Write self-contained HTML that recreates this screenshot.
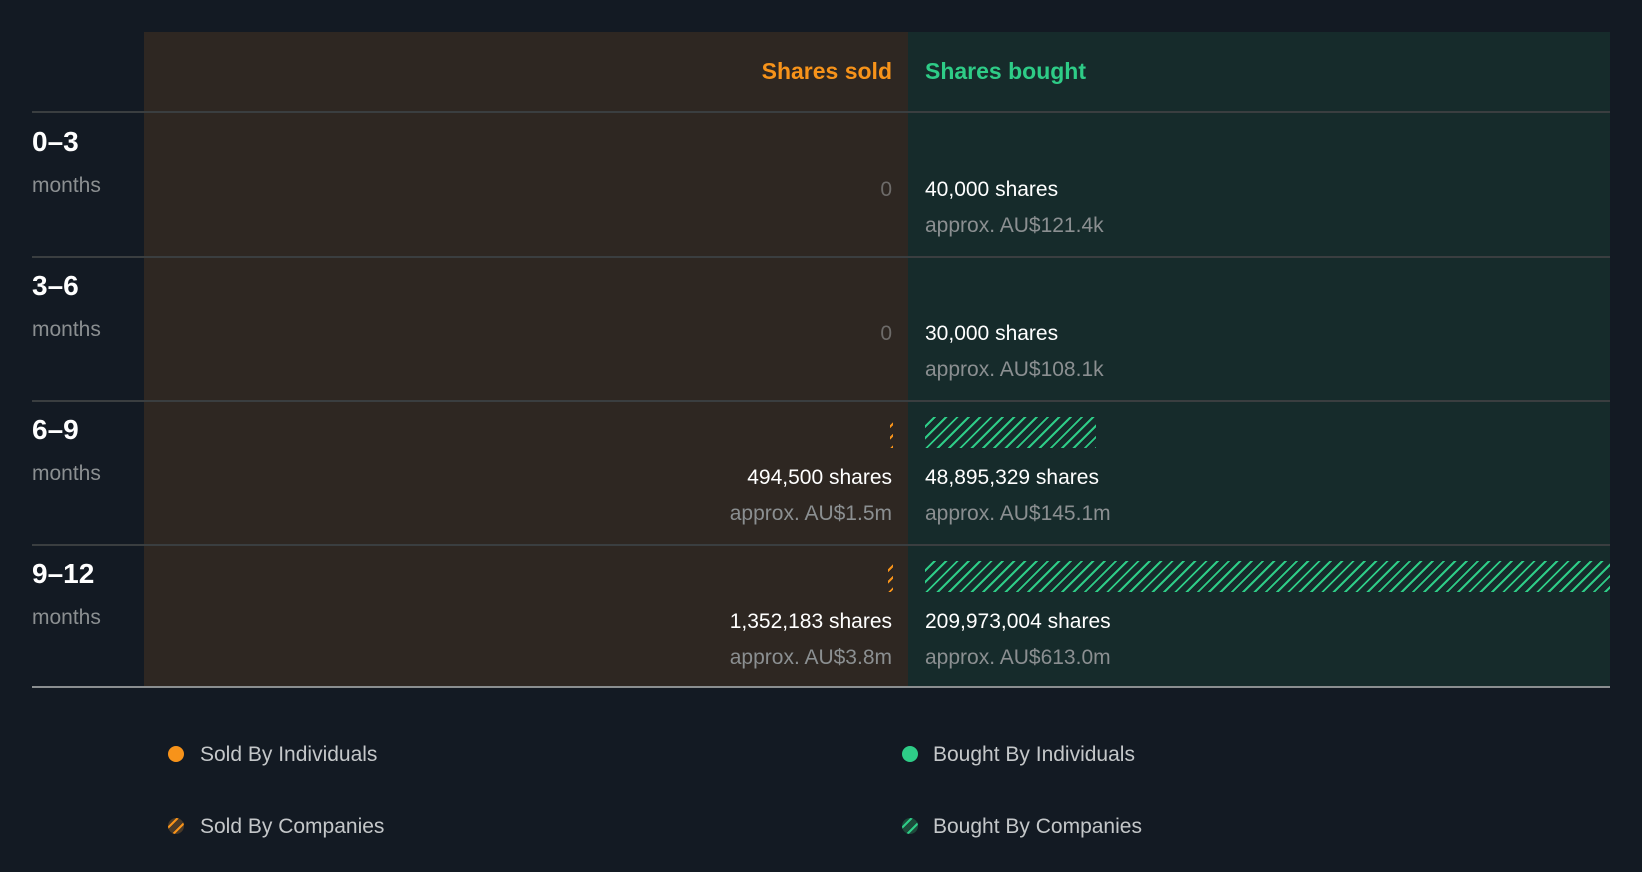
<!DOCTYPE html>
<html><head><style>
*{margin:0;padding:0;box-sizing:border-box}
body{width:1642px;height:872px;background:#131a23;font-family:"Liberation Sans",Arial,sans-serif;position:relative;overflow:hidden}
.a{position:absolute}
.lp{left:144px;width:764px;top:32px;height:655px;background:#2e2722}
.rp{left:908px;width:702px;top:32px;height:655px;background:#162b2b}
.hl{left:32px;width:1578px;height:2px;background:#3a3e40}
.r{text-align:right;right:calc(1642px - 892px)}
.w{color:#fff;font-size:21px}
.g{color:#8b8f91;font-size:21px}
.hd{font-size:23px;font-weight:bold}
.p{font-size:28px;font-weight:bold;color:#fff;left:32px}
.m{font-size:21px;color:#8b8f91;left:32px}
.hg{background:repeating-linear-gradient(135deg,transparent 0 6px,#2ecc87 6px 8px)}
.ho{background:repeating-linear-gradient(135deg,transparent 0 6px,#f7931a 6px 8px)}
.lg{font-size:21px;color:#c4c7c9}
.dot{width:16px;height:16px;border-radius:50%}
</style></head><body>
<div class="a lp"></div><div class="a rp"></div>
<div class="a hd r" style="top:58px;color:#f7931a">Shares sold</div>
<div class="a hd" style="left:925px;top:58px;color:#2ecc87">Shares bought</div>
<div class="a hl" style="top:111px"></div>
<div class="a hl" style="top:256px"></div>
<div class="a hl" style="top:400px"></div>
<div class="a hl" style="top:544px"></div>
<div class="a" style="left:32px;width:1578px;height:2px;top:686px;background:#8a8e90"></div>

<div class="a p" style="top:126px">0–3</div><div class="a m" style="top:174px">months</div>
<div class="a p" style="top:270px">3–6</div><div class="a m" style="top:318px">months</div>
<div class="a p" style="top:414px">6–9</div><div class="a m" style="top:462px">months</div>
<div class="a p" style="top:558px">9–12</div><div class="a m" style="top:606px">months</div>

<div class="a r g" style="top:178px;color:#6d6b69">0</div>
<div class="a w" style="left:925px;top:178px">40,000 shares</div>
<div class="a g" style="left:925px;top:214px">approx. AU$121.4k</div>

<div class="a r g" style="top:322px;color:#6d6b69">0</div>
<div class="a w" style="left:925px;top:322px">30,000 shares</div>
<div class="a g" style="left:925px;top:358px">approx. AU$108.1k</div>

<div class="a ho" style="left:890px;width:3px;top:417px;height:31px"></div>
<div class="a hg" style="left:925px;width:171px;top:417px;height:31px"></div>
<div class="a r w" style="top:466px">494,500 shares</div>
<div class="a r g" style="top:502px">approx. AU$1.5m</div>
<div class="a w" style="left:925px;top:466px">48,895,329 shares</div>
<div class="a g" style="left:925px;top:502px">approx. AU$145.1m</div>

<div class="a ho" style="left:888px;width:5px;top:561px;height:31px"></div>
<div class="a hg" style="left:925px;width:685px;top:561px;height:31px"></div>
<div class="a r w" style="top:610px">1,352,183 shares</div>
<div class="a r g" style="top:646px">approx. AU$3.8m</div>
<div class="a w" style="left:925px;top:610px">209,973,004 shares</div>
<div class="a g" style="left:925px;top:646px">approx. AU$613.0m</div>

<div class="a dot" style="left:168px;top:746px;background:#f7931a"></div>
<div class="a lg" style="left:200px;top:743px">Sold By Individuals</div>
<div class="a dot ho" style="left:168px;top:818px;background-color:#4a3a28"></div>
<div class="a lg" style="left:200px;top:815px">Sold By Companies</div>
<div class="a dot" style="left:902px;top:746px;background:#2ecc87"></div>
<div class="a lg" style="left:933px;top:743px">Bought By Individuals</div>
<div class="a dot hg" style="left:902px;top:818px;background-color:#1d4a3a"></div>
<div class="a lg" style="left:933px;top:815px">Bought By Companies</div>
</body></html>
